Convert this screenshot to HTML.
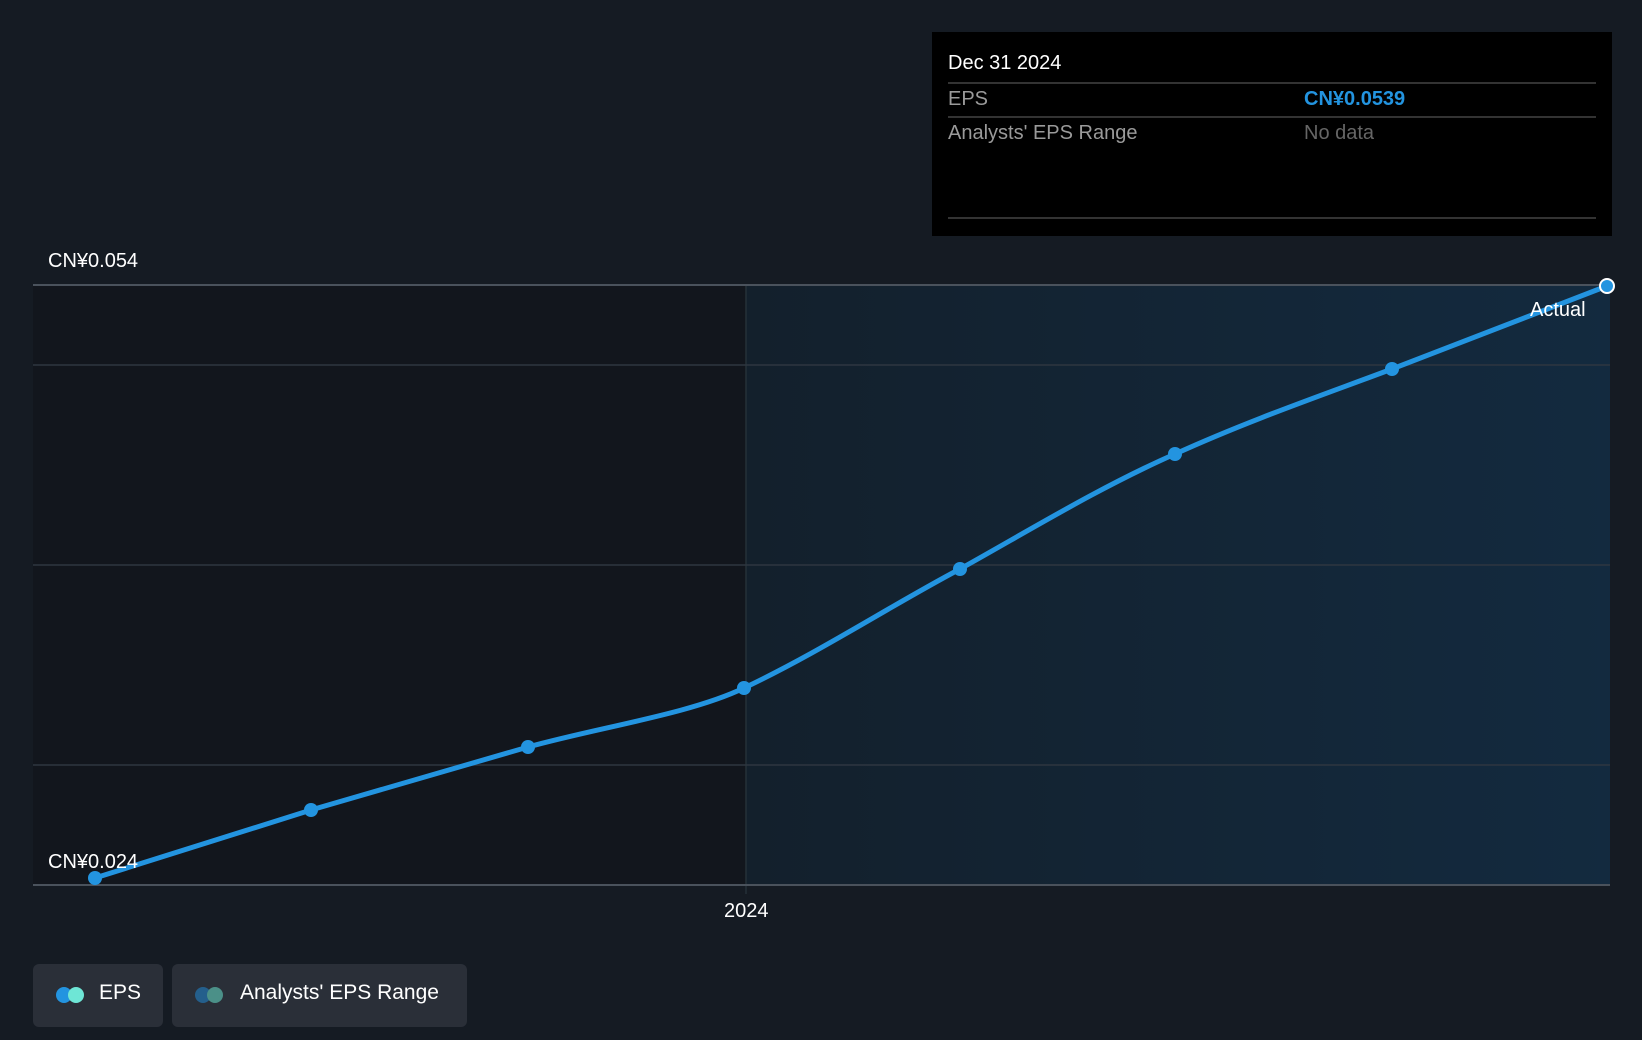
<!DOCTYPE html>
<html><head><style>
body{margin:0;width:1642px;height:1040px;background:#151b23;font-family:"Liberation Sans",sans-serif;overflow:hidden;position:relative}
.t{position:absolute;color:#fff;font-size:20px}
.tip{position:absolute;left:932px;top:32px;width:680px;height:204px;background:#000}
.tip .ln{position:absolute;left:16px;right:16px;height:2px;background:#333}
.leg{position:absolute;top:964px;height:63px;background:#2a2f38;border-radius:6px;color:#fff;font-size:21px;line-height:63px}
.dot{position:absolute;top:24px;width:16px;height:16px;border-radius:50%}
</style></head><body>
<svg width="1642" height="1040" style="position:absolute;left:0;top:0">
<defs><linearGradient id="g" x1="0" x2="1"><stop offset="0" stop-color="#13202c"/><stop offset="1" stop-color="#132a3f"/></linearGradient></defs>
<rect x="33" y="285" width="713" height="600" fill="#12161d"/>
<rect x="746" y="285" width="864" height="600" fill="url(#g)"/>
<line x1="746" y1="285" x2="746" y2="894" stroke="#253038" stroke-width="1.5"/>
<g stroke="#2e3640" stroke-width="1.5">
<line x1="33" y1="365" x2="1610" y2="365"/>
<line x1="33" y1="565" x2="1610" y2="565"/>
<line x1="33" y1="765" x2="1610" y2="765"/>
</g>
<line x1="33" y1="285" x2="1610" y2="285" stroke="#4a525c" stroke-width="2"/>
<line x1="33" y1="885" x2="1610" y2="885" stroke="#4a525c" stroke-width="2"/>
<path d="M95,878 L311,810 L528,747 C600,727 690,714 744,688 C820,652 890,606 960,569 C1030,530 1100,487 1175,454 C1250,420 1320,396 1392,369 L1607,286" fill="none" stroke="#2394e0" stroke-width="5"/>
<g fill="#2394e0">
<circle cx="95" cy="878" r="7"/><circle cx="311" cy="810" r="7"/><circle cx="528" cy="747" r="7"/><circle cx="744" cy="688" r="7"/><circle cx="960" cy="569" r="7"/><circle cx="1175" cy="454" r="7"/><circle cx="1392" cy="369" r="7"/>
</g>
<circle cx="1607" cy="286" r="7" fill="#2394e0" stroke="#fff" stroke-width="2"/>
</svg>
<div class="t" style="left:48px;top:250px">CN¥0.054</div>
<div class="t" style="left:48px;top:851px">CN¥0.024</div>
<div class="t" style="left:724px;top:900px">2024</div>
<div class="t" style="left:1530px;top:299px">Actual</div>
<div class="tip">
<div style="position:absolute;left:16px;top:20px;color:#fff;font-size:20px">Dec 31 2024</div>
<div class="ln" style="top:50px"></div>
<div style="position:absolute;left:16px;top:56px;color:#9a9a9a;font-size:20px">EPS</div>
<div style="position:absolute;left:372px;top:56px;color:#2394e0;font-size:20px;font-weight:bold">CN¥0.0539</div>
<div class="ln" style="top:84px"></div>
<div style="position:absolute;left:16px;top:90px;color:#9a9a9a;font-size:20px">Analysts' EPS Range</div>
<div style="position:absolute;left:372px;top:90px;color:#666;font-size:20px">No data</div>
<div class="ln" style="top:185px"></div>
</div>
<div class="leg" style="left:33px;width:130px"><span class="dot" style="left:23px;top:23px;background:#2394e0"></span><span class="dot" style="left:35px;top:23px;background:#6ee6d6"></span><span style="position:absolute;left:66px;top:-3px">EPS</span></div>
<div class="leg" style="left:172px;width:295px"><span class="dot" style="left:23px;top:23px;background:#245f8c"></span><span class="dot" style="left:35px;top:23px;background:#4b9088"></span><span style="position:absolute;left:68px;top:-3px">Analysts' EPS Range</span></div>
</body></html>
